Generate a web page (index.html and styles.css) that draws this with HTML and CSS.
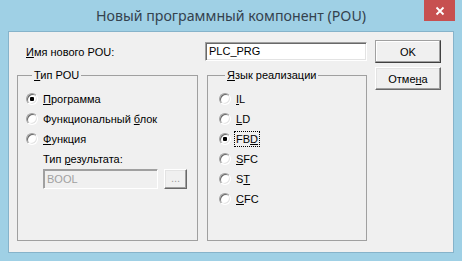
FILE: index.html
```html
<!DOCTYPE html>
<html lang="ru">
<head>
<meta charset="utf-8">
<link rel="stylesheet" href="styles.css">
</head>
<body>
<div class="window">
  <div class="titlebar">
    <div class="title">Новый программный компонент (POU)</div>
    <div class="close"><svg width="10" height="10" viewBox="0 0 10 10"><path d="M1.5 1.5 L8.5 8.5 M8.5 1.5 L1.5 8.5" stroke="#fff" stroke-width="1.8" fill="none"/></svg></div>
  </div>
  <div class="client">
    <div class="main">
      <div class="toprow">
        <span class="label"><u>И</u>мя нового POU:</span>
        <div class="field">PLC_PRG</div>
      </div>
      <div class="groups">
        <fieldset class="group group-left">
          <legend><u>Т</u>ип POU</legend>
          <div class="row"><span class="radio checked"></span><span><u>П</u>рограмма</span></div>
          <div class="row"><span class="radio"></span><span>Функциональный <u>б</u>лок</span></div>
          <div class="row"><span class="radio"></span><span><u>Ф</u>ункция</span></div>
          <div class="sublabel">Тип <u>р</u>езультата:</div>
          <div class="subrow">
            <div class="field disabled">BOOL</div>
            <div class="btn small disabled">...</div>
          </div>
        </fieldset>
        <fieldset class="group group-right">
          <legend><u>Я</u>зык реализации</legend>
          <div class="row"><span class="radio"></span><span><u>I</u>L</span></div>
          <div class="row"><span class="radio"></span><span><u>L</u>D</span></div>
          <div class="row"><span class="radio checked"></span><span class="focus">FB<u>D</u></span></div>
          <div class="row"><span class="radio"></span><span><u>S</u>FC</span></div>
          <div class="row"><span class="radio"></span><span>S<u>T</u></span></div>
          <div class="row"><span class="radio"></span><span><u>C</u>FC</span></div>
        </fieldset>
      </div>
    </div>
    <div class="buttons">
      <div class="btn default">OK</div>
      <div class="btn">Отме<u>н</u>а</div>
    </div>
  </div>
</div>
</body>
</html>
```

FILE: styles.css
```css
* { box-sizing: border-box; }
html, body { margin: 0; padding: 0; }
body {
  width: 462px;
  height: 261px;
  overflow: hidden;
  background: #9dcfe4;
}
.window {
  width: 462px;
  height: 261px;
  background: #9fd0e5;
  padding: 0 8px 8px 8px;
  display: flex;
  flex-direction: column;
}
.titlebar {
  height: 31px;
  display: grid;
  grid-template-columns: 1fr auto 1fr;
  align-items: start;
  margin: 0 -8px;
}
.title {
  grid-column: 2;
  font-family: "Noto Sans", "Open Sans", sans-serif;
  font-size: 14.2px;
  line-height: 31px;
  color: #34424e;
  white-space: nowrap;
}
.close {
  grid-column: 3;
  justify-self: end;
  margin-right: 7px;
  width: 31px;
  height: 21px;
  background: #c75050;
  display: flex;
  align-items: center;
  justify-content: center;
}
.close svg { display: block; }
.client {
  height: 222px;
  background: #f0f0f0;
  border: 1px solid #86b3ca;
  padding: 8px 0 0 8px;
  display: flex;
  gap: 8px;
  font-family: "Liberation Sans", Arial, sans-serif;
  font-size: 11px;
  color: #000;
}
.main {
  width: 350px;
  display: flex;
  flex-direction: column;
}
.toprow {
  margin-top: 2px;
  height: 19px;
  display: flex;
  align-items: center;
}
.label { padding-left: 9px; }
.field {
  margin-left: auto;
  width: 162px;
  height: 19px;
  background: #fff;
  border: 1px solid;
  border-color: #a0a0a0 #fff #fff #a0a0a0;
  box-shadow: inset 1px 1px 0 #696969, inset -1px -1px 0 #e3e3e3;
  padding: 0 3px;
  line-height: 17px;
  white-space: nowrap;
}
.field.disabled {
  margin-left: 0;
  width: 115px;
  height: 20px;
  line-height: 18px;
  background: #f0f0f0;
  color: #a0a0a0;
  box-shadow: inset 1px 1px 0 #a0a0a0, inset -1px -1px 0 #f0f0f0;
}
.groups {
  margin-top: 8px;
  display: flex;
  gap: 9px;
}
.group {
  margin: 0;
  height: 172px;
  border: 1px solid #a0a0a0;
  padding: 7px 0 0 8px;
  min-width: 0;
}
.group-left { width: 181px; }
.group-right { width: 160px; padding-left: 11px; }
legend {
  margin-left: 6px;
  padding: 0 2px;
  line-height: 13px;
  font-size: 11px;
}
.row {
  height: 20px;
  display: flex;
  align-items: center;
  white-space: nowrap;
}
.radio {
  width: 12px;
  height: 12px;
  flex: none;
  margin-right: 5px;
  border-radius: 50%;
  background: #fff;
  border: 1px solid;
  border-color: #a0a0a0 #fff #fff #a0a0a0;
  box-shadow: inset 1px 1px 0 #696969, inset -1px -1px 0 #e3e3e3;
  display: flex;
  align-items: center;
  justify-content: center;
}
.radio.checked::after {
  content: "";
  width: 4px;
  height: 4px;
  border-radius: 1px;
  background: #000;
}
.focus {
  outline: 1px dotted #000;
  outline-offset: 0;
  padding: 1px 1px;
  margin-left: -1px;
}
.sublabel {
  margin-top: 4px;
  padding-left: 17px;
  line-height: 13px;
}
.subrow {
  margin-top: 3px;
  padding-left: 17px;
  display: flex;
  gap: 6px;
}
.buttons {
  display: flex;
  flex-direction: column;
  gap: 4px;
}
.btn {
  width: 66px;
  height: 23px;
  background: #f0f0f0;
  border: 1px solid;
  border-color: #fff #696969 #696969 #fff;
  box-shadow: inset -1px -1px 0 #a0a0a0, inset 1px 1px 0 #e3e3e3;
  display: flex;
  align-items: center;
  justify-content: center;
  white-space: nowrap;
}
.btn.default {
  border-color: #a0a0a0 #404040 #404040 #a0a0a0;
  box-shadow: inset -1px -1px 0 #a0a0a0, inset 1px 1px 0 #fff;
}
.btn.small {
  width: 23px;
  height: 20px;
  color: #a0a0a0;
  padding-bottom: 3px;
}
u { text-decoration: underline; }
```
